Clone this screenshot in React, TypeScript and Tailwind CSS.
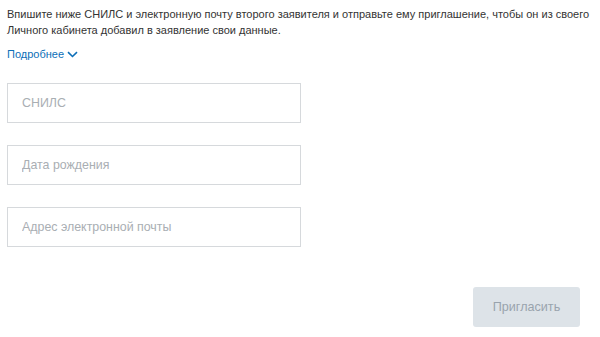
import React from "react";

export default function App() {
  return (
    <div className="w-[600px] h-[337px] bg-white overflow-hidden px-[7px] pt-[6px]" style={{ fontFamily: '"Liberation Sans", Arial, sans-serif' }}>
      <p className="text-[11px] leading-[16px] text-[#333333] m-0">
        Впишите ниже СНИЛС и электронную почту второго заявителя и отправьте ему приглашение, чтобы он из своего Личного кабинета добавил в заявление свои данные.
      </p>
      <div className="mt-[8px] flex items-center gap-[3px] text-[11px] leading-[16px] text-[#0d6fb8]">
        <span>Подробнее</span>
        <svg width="11" height="7" viewBox="0 0 11 7" fill="none">
          <path d="M1 1.2L5.5 5.5L10 1.2" stroke="#0d6fb8" strokeWidth="1.6" />
        </svg>
      </div>
      <div className="mt-[21px] flex flex-col gap-[22px] w-[294px]">
        {["СНИЛС", "Дата рождения", "Адрес электронной почты"].map((p) => (
          <input
            key={p}
            placeholder={p}
            className="h-[40px] w-full border border-[#d6d9dc] bg-white px-[14px] text-[12.4px] text-[#333] placeholder:text-[#a9aeb3] outline-none"
            style={{ fontFamily: '"Liberation Sans", Arial, sans-serif' }}
          />
        ))}
      </div>
      <div className="mt-[40px] flex justify-end pr-[13px]">
        <button className="h-[40px] w-[107px] rounded-[3px] bg-[#dde3e8] text-[12.6px] text-[#99a3ad]">
          Пригласить
        </button>
      </div>
    </div>
  );
}
